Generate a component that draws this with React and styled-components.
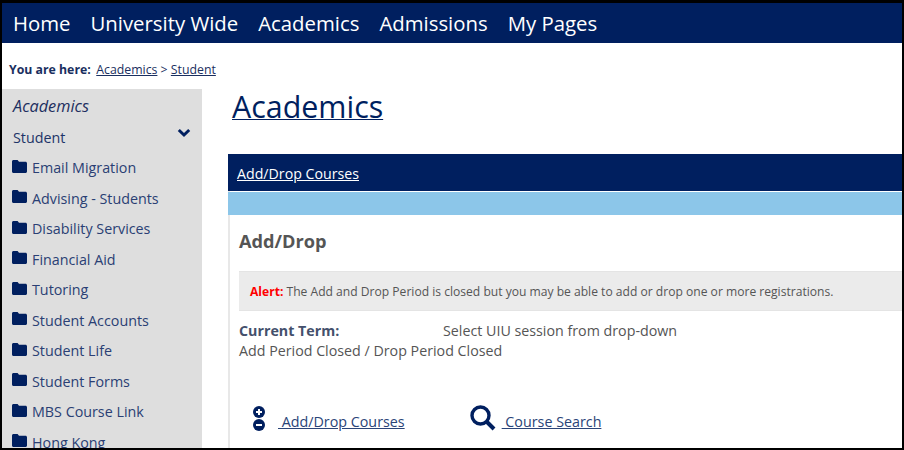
import styled, { createGlobalStyle } from 'styled-components';

const GlobalStyle = createGlobalStyle`
  html, body {
    margin: 0;
    padding: 0;
    background: #fff;
  }
`;

const sideLinks = [
  'Email Migration',
  'Advising - Students',
  'Disability Services',
  'Financial Aid',
  'Tutoring',
  'Student Accounts',
  'Student Life',
  'Student Forms',
  'MBS Course Link',
  'Hong Kong',
];

function FolderIcon() {
  return (
    <FolderSvg viewBox="0 0 15 13">
      <path d="M1.5 0H5.6L7 1.8H13.5C14.3 1.8 15 2.5 15 3.3V11.5C15 12.3 14.3 13 13.5 13H1.5C.7 13 0 12.3 0 11.5V1.5C0 .7.7 0 1.5 0Z" fill="#001f5f" />
    </FolderSvg>
  );
}

function App() {
  return (
    <Frame>
      <GlobalStyle />
      <TopNav>
        <NavItem>Home</NavItem>
        <NavItem>University Wide</NavItem>
        <NavItem>Academics</NavItem>
        <NavItem>Admissions</NavItem>
        <NavItem>My Pages</NavItem>
      </TopNav>
      <Breadcrumb>
        <strong>You are here:</strong>
        <span>
          <CrumbLink>Academics</CrumbLink> &gt; <CrumbLink>Student</CrumbLink>
        </span>
      </Breadcrumb>
      <Columns>
        <Sidebar>
          <SideTitle>Academics</SideTitle>
          <SideGroup>
            Student
            <svg width="14" height="10" viewBox="0 0 14 10">
              <path d="M1.8 2L7 7L12.2 2" fill="none" stroke="#001f5f" strokeWidth="3" />
            </svg>
          </SideGroup>
          <SideList>
            {sideLinks.map((link) => (
              <SideItem key={link}>
                <FolderIcon />
                {link}
              </SideItem>
            ))}
          </SideList>
        </Sidebar>
        <Main>
          <PageTitle>Academics</PageTitle>
          <Panel>
            <PanelHead>Add/Drop Courses</PanelHead>
            <BlueStrip />
            <PanelBody>
              <SectionTitle>Add/Drop</SectionTitle>
              <AlertBox>
                <AlertLabel>Alert:</AlertLabel> The Add and Drop Period is closed but you may be able to add or drop one or more registrations.
              </AlertBox>
              <TermRow>
                <TermLabel>Current Term:</TermLabel>
                <span>Select UIU session from drop-down</span>
              </TermRow>
              <PeriodRow>Add Period Closed / Drop Period Closed</PeriodRow>
              <ActionRow>
                <Action $gap={13}>
                  <svg width="12" height="25" viewBox="0 0 12 25">
                    <circle cx="6" cy="6" r="6" fill="#001f5f" />
                    <path d="M6 3V9M3 6H9" stroke="#fff" strokeWidth="2" />
                    <circle cx="6" cy="19" r="6" fill="#001f5f" />
                    <path d="M3 19H9" stroke="#fff" strokeWidth="2" />
                  </svg>
                  <ActionLink>&nbsp;Add/Drop Courses</ActionLink>
                </Action>
                <Action $gap={6}>
                  <svg width="26" height="26" viewBox="0 0 26 26">
                    <circle cx="10.5" cy="10.5" r="8.5" fill="none" stroke="#001f5f" strokeWidth="3.4" />
                    <path d="M16.5 16.5L24 24" stroke="#001f5f" strokeWidth="4" />
                  </svg>
                  <ActionLink>&nbsp;Course Search</ActionLink>
                </Action>
              </ActionRow>
            </PanelBody>
          </Panel>
        </Main>
      </Columns>
    </Frame>
  );
}

const Frame = styled.div`
  box-sizing: border-box;
  width: 904px;
  height: 450px;
  overflow: hidden;
  border-style: solid;
  border-color: #000;
  border-width: 3px 2px 2px 2px;
  font-family: "Open Sans", sans-serif;
  color: #001f5f;
`;

const TopNav = styled.nav`
  display: flex;
  gap: 20px;
  height: 40px;
  padding-left: 11px;
  align-items: center;
  background: #001f5f;
`;

const NavItem = styled.span`
  color: #fff;
  font-size: 20.35px;
`;

const Breadcrumb = styled.div`
  display: flex;
  gap: 5.5px;
  height: 46px;
  padding: 18px 0 0 7px;
  box-sizing: border-box;
  font-size: 12.3px;
  color: #1a2f60;
`;

const CrumbLink = styled.span`
  text-decoration: underline;
`;

const Columns = styled.div`
  display: flex;
  align-items: flex-start;
`;

const Sidebar = styled.aside`
  flex: 0 0 200px;
  height: 360px;
  padding: 5px 0 0 11px;
  box-sizing: border-box;
  background: #dedede;
`;

const SideTitle = styled.div`
  font-size: 16.3px;
  font-style: italic;
  line-height: 24px;
  color: #1d2f60;
`;

const SideGroup = styled.div`
  display: flex;
  justify-content: space-between;
  align-items: flex-start;
  padding-right: 11px;
  margin-top: 10px;
  font-size: 14.3px;
  line-height: 19px;
  color: #1d3468;

  svg {
    margin-top: 0;
  }
`;

const SideList = styled.div`
  display: flex;
  flex-direction: column;
  gap: 11px;
  margin-top: 11px;
`;

const SideItem = styled.div`
  display: flex;
  align-items: center;
  gap: 5px;
  height: 19.5px;
  font-size: 14.3px;
  color: #2a3f74;
`;

const FolderSvg = styled.svg`
  flex: none;
  width: 15px;
  height: 13px;
  margin: -3px 0 0 -1px;
`;

const Main = styled.main`
  flex: 1;
  min-width: 0;
  padding-left: 26px;
`;

const PageTitle = styled.h1`
  margin: 0 0 0 4px;
  height: 65px;
  font-size: 30.4px;
  font-weight: 400;
  line-height: 36px;
  text-decoration: underline;
  text-decoration-thickness: 1px;
  color: #001f5f;
`;

const Panel = styled.section`
  border-left: 2px solid #e8e8e8;
  height: 300px;
`;

const PanelHead = styled.div`
  height: 37px;
  margin-left: -2px;
  padding-left: 9px;
  box-sizing: border-box;
  background: #001f5f;
  color: #fff;
  font-size: 14.2px;
  line-height: 39px;
  text-decoration: underline;
`;

const BlueStrip = styled.div`
  height: 23px;
  margin: 1px 0 0 -2px;
  background: #8cc6e9;
`;

const PanelBody = styled.div`
  padding: 14px 0 0 9px;
  color: #555;
`;

const SectionTitle = styled.h2`
  margin: 0;
  font-size: 18.2px;
  font-weight: 700;
  line-height: 25px;
  color: #555;
`;

const AlertBox = styled.div`
  margin-top: 17px;
  height: 40px;
  padding-left: 11px;
  box-sizing: border-box;
  background: #ebebeb;
  border-top: 1px solid #e4e4e4;
  border-bottom: 1px solid #e4e4e4;
  font-size: 12.1px;
  line-height: 40px;
  color: #555;
`;

const AlertLabel = styled.strong`
  color: #f00;
`;

const TermRow = styled.div`
  display: flex;
  margin-top: 9px;
  font-size: 14.25px;
  line-height: 21px;

  span {
    color: #555;
  }
`;

const TermLabel = styled.strong`
  width: 204px;
  flex: none;
  color: #44506c;
`;

const PeriodRow = styled.div`
  font-size: 14.25px;
  line-height: 20px;
  color: #555;
`;

const ActionRow = styled.div`
  display: flex;
  gap: 65px;
  margin: 44px 0 0 14px;
`;

const Action = styled.div`
  display: flex;
  align-items: flex-end;
  gap: ${(props) => props.$gap}px;
  font-size: 14.3px;
`;

const ActionLink = styled.span`
  text-decoration: underline;
  color: #2a4478;
  line-height: 18px;
`;

export default App;
